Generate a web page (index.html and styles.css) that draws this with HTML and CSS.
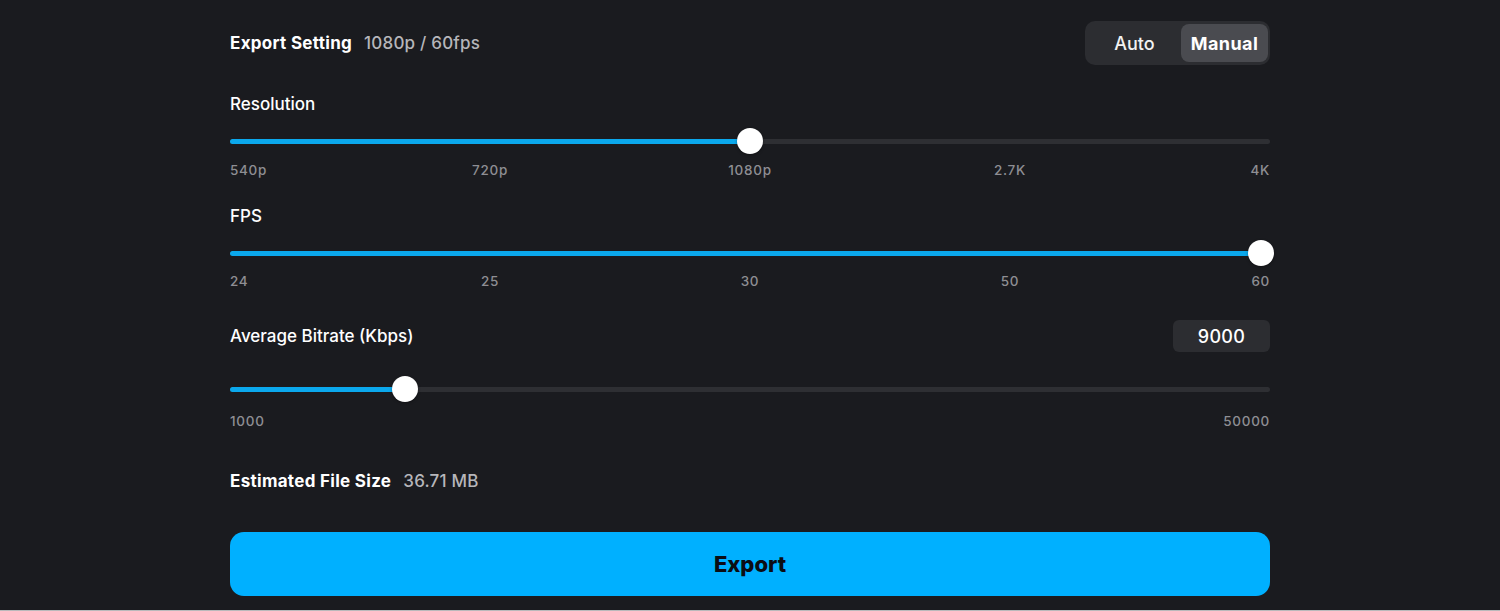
FILE: index.html
```html
<!DOCTYPE html>
<html lang="en">
<head>
<meta charset="utf-8">
<title>Export Setting</title>
<link rel="stylesheet" href="styles.css">
</head>
<body>
<div class="panel">
  <div class="header">
    <div class="title"><span class="title-main">Export Setting</span><span class="title-sub">1080p / 60fps</span></div>
    <div class="segmented">
      <div class="seg seg-auto">Auto</div>
      <div class="seg seg-manual active">Manual</div>
    </div>
  </div>

  <div class="section res">
    <div class="label">Resolution</div>
    <div class="slider"><div class="track"><div class="fill" style="width:50%"><span class="thumb"></span></div></div></div>
    <div class="ticks">
      <span class="tick first"><span>540p</span></span>
      <span class="tick"><span>720p</span></span>
      <span class="tick"><span>1080p</span></span>
      <span class="tick"><span>2.7K</span></span>
      <span class="tick last"><span>4K</span></span>
    </div>
  </div>

  <div class="section fps">
    <div class="label">FPS</div>
    <div class="slider"><div class="track"><div class="fill" style="width:99.1%"><span class="thumb"></span></div></div></div>
    <div class="ticks">
      <span class="tick first"><span>24</span></span>
      <span class="tick"><span>25</span></span>
      <span class="tick"><span>30</span></span>
      <span class="tick"><span>50</span></span>
      <span class="tick last"><span>60</span></span>
    </div>
  </div>

  <div class="section bitrate">
    <div class="label-row">
      <div class="label">Average Bitrate (Kbps)</div>
      <div class="value-box">9000</div>
    </div>
    <div class="slider"><div class="track"><div class="fill" style="width:16.8%"><span class="thumb"></span></div></div></div>
    <div class="ticks ticks-ends">
      <span class="end">1000</span>
      <span class="end">50000</span>
    </div>
  </div>

  <div class="estimate"><span class="title-main">Estimated File Size</span><span class="title-sub">36.71 MB</span></div>

  <button class="export">Export</button>
</div>
</body>
</html>
```
FILE: styles.css
```css
* { box-sizing: border-box; }
html, body { margin: 0; padding: 0; }
body {
  background: #1a1b1f;
  color: #ffffff;
  font-family: Inter, "Noto Sans", "Liberation Sans", sans-serif;
  height: 611px;
  overflow: hidden;
  border-bottom: 1px solid #b9b9bb;
}
.panel {
  padding: 21px 230px 0 230px;
  display: flex;
  flex-direction: column;
}
.header {
  display: flex;
  justify-content: space-between;
  align-items: center;
  height: 44px;
}
.title, .estimate {
  display: flex;
  align-items: baseline;
  gap: 12px;
  font-size: 17px;
  line-height: 20px;
}
.title-main { font-weight: 700; color: #fff; letter-spacing: 0.3px; }
.title-sub { font-weight: 500; color: #b6b6ba; letter-spacing: 0.2px; }
.segmented {
  display: flex;
  background: #2c2d31;
  border-radius: 10px;
  padding: 3px 2px 3px 3px;
  height: 44px;
  width: 185px;
}
.seg {
  display: flex;
  align-items: center;
  justify-content: center;
  font-size: 18px;
  border-radius: 8px;
}
.seg-auto { width: 93px; font-weight: 500; color: #f2f2f2; }
.seg-manual { width: 87px; font-weight: 700; color: #fff; background: #4a4b50; letter-spacing: 0.4px; }

.section { display: flex; flex-direction: column; }
.label { font-size: 17px; line-height: 20px; font-weight: 500; color: #fff; }
.res { margin-top: 29px; }
.fps { margin-top: 28px; }
.bitrate { margin-top: 31px; }

.slider {
  height: 26px;
  display: flex;
  align-items: center;
  margin-top: 14px;
}
.track {
  position: relative;
  width: 100%;
  height: 5px;
  border-radius: 3px;
  background: #2e2f33;
}
.fill {
  position: relative;
  height: 100%;
  border-radius: 3px;
  background: #0ba8ec;
}
.thumb {
  position: absolute;
  right: -13px;
  top: 50%;
  width: 26px;
  height: 26px;
  margin-top: -13px;
  border-radius: 50%;
  background: #ffffff;
  box-shadow: 0 1px 3px rgba(0,0,0,0.35);
}
.ticks {
  display: flex;
  justify-content: space-between;
  margin-top: 8px;
  height: 16px;
  font-size: 13.5px;
  line-height: 16px;
  font-weight: 500;
  color: #8e8e93;
  letter-spacing: 0.7px;
}
.fps .ticks { margin-top: 7px; }
.tick {
  width: 0;
  display: flex;
  justify-content: center;
  white-space: nowrap;
}
.tick.first { justify-content: flex-start; }
.tick.last { justify-content: flex-end; }

.label-row {
  display: flex;
  justify-content: space-between;
  align-items: center;
  height: 32px;
}
.value-box {
  width: 97px;
  height: 32px;
  display: flex;
  align-items: center;
  justify-content: center;
  background: #2c2d31;
  border-radius: 6px;
  font-size: 18px;
  font-weight: 500;
  color: #fff;
  letter-spacing: 0.3px;
}
.bitrate .slider { margin-top: 24px; }
.bitrate .ticks-ends { margin-top: 11px; }

.estimate { margin-top: 42px; }

.export {
  margin-top: 41px;
  height: 64px;
  width: 100%;
  border: none;
  border-radius: 14px;
  background: #00b0ff;
  color: #0b0d14;
  font-family: inherit;
  font-size: 22px;
  font-weight: 800;
}
```
